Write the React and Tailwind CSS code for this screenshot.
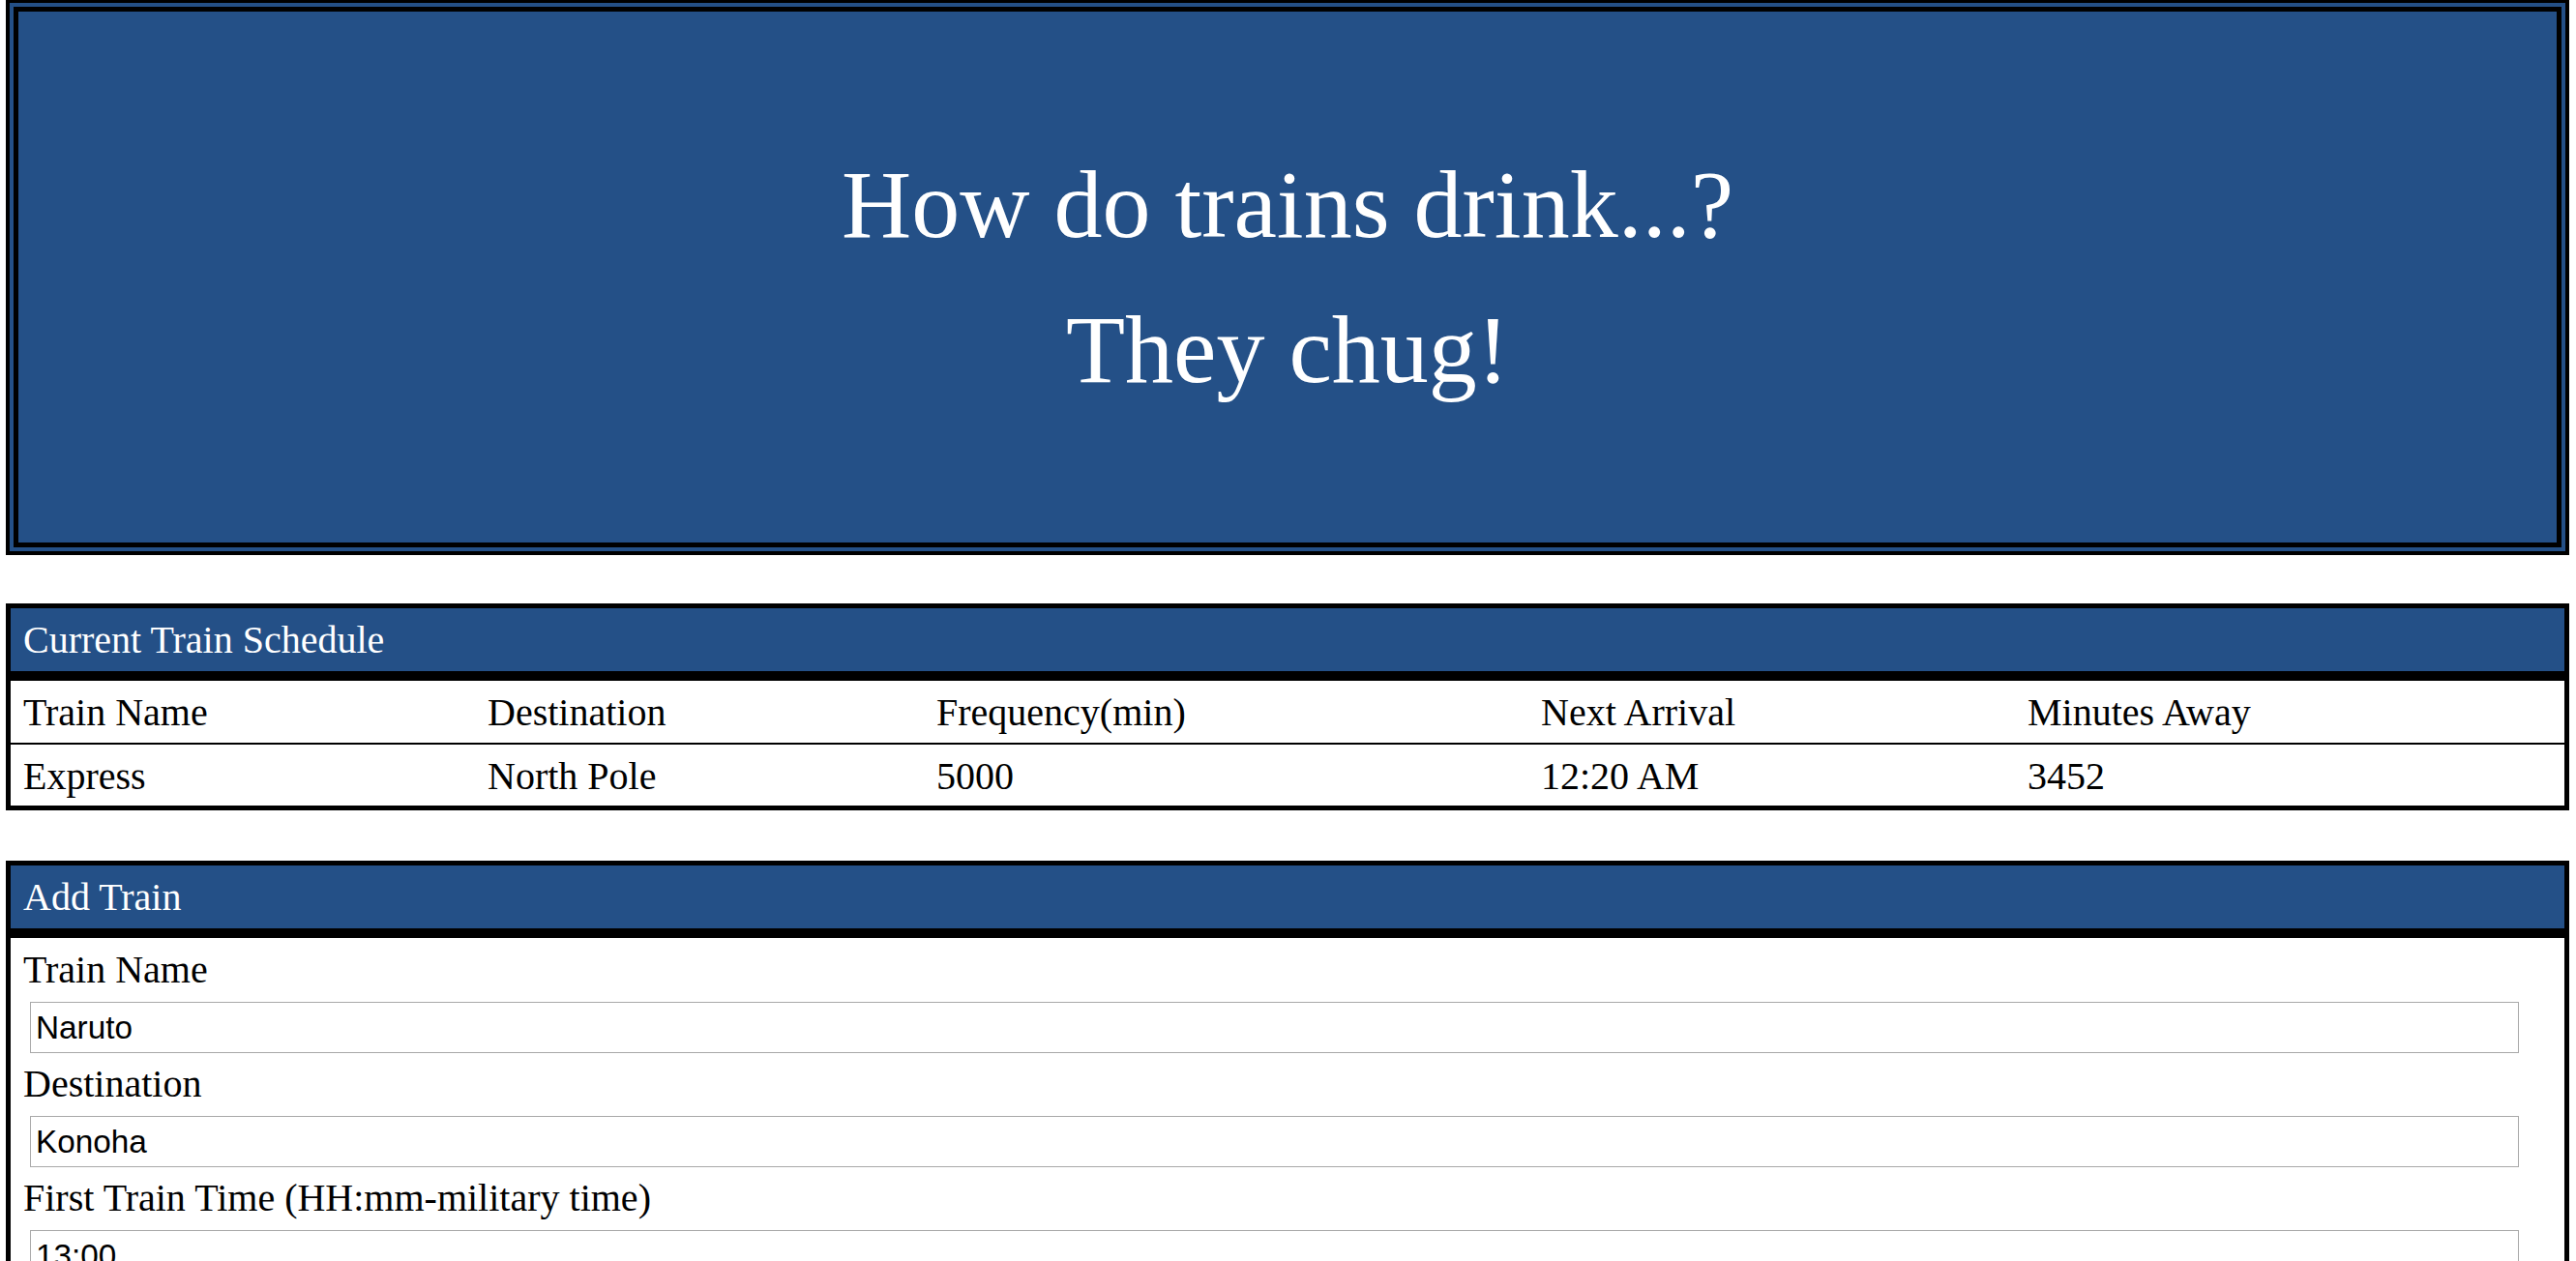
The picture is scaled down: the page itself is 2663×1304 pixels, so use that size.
import React from "react";

const BLUE = "bg-[#245087]";

function Field({ label, value }) {
  return (
    <div className="mb-[9px]">
      <div className="pl-[13px] h-[46px] leading-[46px] text-[40px]">{label}</div>
      <div className="mt-[10px] ml-[20px] mr-[47px] h-[53px] border border-[#a9a9a9] bg-white flex items-center pl-[5px] font-['Liberation_Sans',Arial,sans-serif] text-[33.33px] text-black">
        {value}
      </div>
    </div>
  );
}

export default function App() {
  const cols = ["Train Name", "Destination", "Frequency(min)", "Next Arrival", "Minutes Away"];
  const row = ["Express", "North Pole", "5000", "12:20 AM", "3452"];
  const grid = "grid grid-cols-[480px_464px_625px_503px_1fr]";
  return (
    <div className="min-h-screen bg-white font-['Liberation_Serif','Times_New_Roman',serif] text-black">
      <div className={`mt-[-1px] ml-[6px] mr-[7px] h-[575px] border-[4px] border-black ${BLUE} p-[4px] flex`}>
        <div className="flex-1 border-[5px] border-black flex flex-col items-center justify-center text-white text-[100px] leading-[150px] text-center">
          <div>How do trains drink...?</div>
          <div>They chug!</div>
        </div>
      </div>

      <div className="mt-[50px] ml-[6px] mr-[7px] border-[5px] border-black">
        <div className={`h-[75px] ${BLUE} border-b-[10px] border-black flex items-center pl-[13px] text-white text-[40px] leading-[46px]`}>
          Current Train Schedule
        </div>
        <div className={`${grid} h-[64px] pt-[10px] text-[40px] leading-[46px]`}>
          {cols.map((c) => (
            <div key={c} className="pl-[13px] whitespace-nowrap">{c}</div>
          ))}
        </div>
        <div className={`${grid} h-[65px] pt-[10px] border-t-2 border-black text-[40px] leading-[46px]`}>
          {row.map((c) => (
            <div key={c} className="pl-[13px] whitespace-nowrap">{c}</div>
          ))}
        </div>
      </div>

      <div className="mt-[52px] ml-[6px] mr-[7px] border-[5px] border-black">
        <div className={`h-[75px] ${BLUE} border-b-[10px] border-black flex items-center pl-[13px] text-white text-[40px] leading-[46px]`}>
          Add Train
        </div>
        <div className="pt-[10px] pb-[20px]">
          <Field label="Train Name" value="Naruto" />
          <Field label="Destination" value="Konoha" />
          <Field label="First Train Time (HH:mm-military time)" value="13:00" />
          <Field label="Frequency (min)" value="" />
          <div className="pl-[20px] mt-[10px]">
            <button className="border border-[#767676] bg-[#efefef] px-[15px] py-[3px] font-['Liberation_Sans',Arial,sans-serif] text-[33.33px]">
              Submit
            </button>
          </div>
        </div>
      </div>
    </div>
  );
}
